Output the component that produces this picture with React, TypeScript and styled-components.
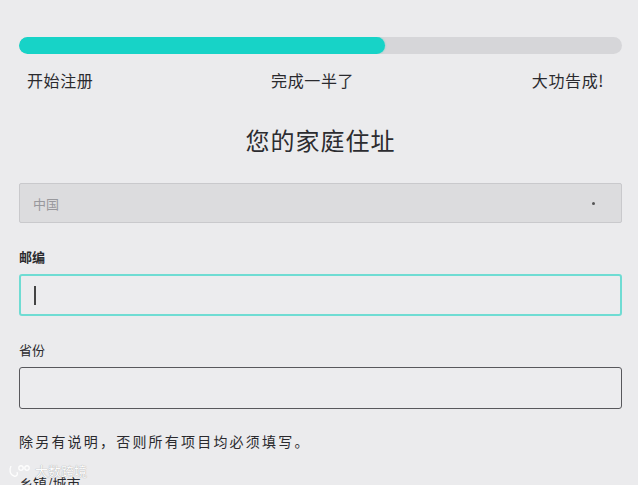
import styled, { createGlobalStyle } from "styled-components";

const GlobalStyle = createGlobalStyle`
  html, body {
    margin: 0;
    padding: 0;
    background: #ebebed;
    font-family: "Noto Sans CJK SC", "Noto Sans", sans-serif;
    overflow: hidden;
  }
`;

const Page = styled.main`
  position: relative;
  width: 638px;
  height: 485px;
  padding: 37px 16px 0 19px;
  box-sizing: border-box;
  overflow: hidden;
`;

const Track = styled.div`
  height: 17px;
  border-radius: 9px;
  background: #d6d6d9;
  overflow: hidden;
`;

const Fill = styled.div`
  height: 100%;
  border-radius: 9px;
  background: #17d3c7;
  box-shadow: 0 0 2px rgba(23, 211, 199, 0.6);
`;

const Steps = styled.div`
  display: flex;
  justify-content: space-between;
  margin: 15px 18px 0 8px;
  font-size: 16px;
  line-height: 22px;
  color: #2a2a2e;
  letter-spacing: 0.6px;
`;

const Title = styled.h1`
  margin: 32px 0 0;
  text-align: center;
  font-size: 24px;
  line-height: 34px;
  font-weight: 400;
  color: #2c2c30;
  letter-spacing: 1px;
`;

const Select = styled.div`
  margin-top: 26px;
  height: 40px;
  box-sizing: border-box;
  display: flex;
  align-items: center;
  justify-content: space-between;
  padding: 0 26px 0 13px;
  background: #dcdcde;
  border: 1px solid #c9c9cc;
  border-radius: 2px;
  font-size: 13px;
  color: #98989c;
`;

const Dot = styled.span`
  width: 3px;
  height: 3px;
  border-radius: 50%;
  background: #555;
`;

const Label = styled.label<{ $bold?: boolean }>`
  display: block;
  margin-top: 24px;
  font-size: 13px;
  line-height: 20px;
  font-weight: ${(p) => (p.$bold ? 700 : 400)};
  color: #2a2a2e;
`;

const Field = styled.div<{ $focused?: boolean }>`
  margin-top: 7px;
  height: 42px;
  box-sizing: border-box;
  display: flex;
  align-items: center;
  padding-left: 13px;
  background: #ececee;
  border: ${(p) => (p.$focused ? "2px solid #6fdcd3" : "1.5px solid #58585c")};
  border-radius: 3px;
`;

const Caret = styled.span`
  width: 1.5px;
  height: 19px;
  background: #444;
`;

const Note = styled.p`
  margin: 21px 0 0;
  font-size: 14px;
  line-height: 22px;
  color: #2a2a2e;
  letter-spacing: 2.2px;
`;

const NextLabel = styled.div`
  margin-top: 21px;
  font-size: 14px;
  line-height: 20px;
  color: #2a2a2e;
`;

const Watermark = styled.div`
  position: absolute;
  left: 8px;
  top: 461px;
  display: flex;
  align-items: center;
  gap: 3px;
  font-size: 13px;
  color: #ffffff;
  text-shadow: 0 0 1px rgba(0, 0, 0, 0.45);
  opacity: 0.9;
`;

export default function App() {
  return (
    <>
      <GlobalStyle />
      <Page>
        <Track>
          <Fill style={{ width: "60.7%" }} />
        </Track>
        <Steps>
          <span>开始注册</span>
          <span>完成一半了</span>
          <span>大功告成!</span>
        </Steps>
        <Title>您的家庭住址</Title>
        <Select>
          <span>中国</span>
          <Dot />
        </Select>
        <Label $bold>邮编</Label>
        <Field $focused>
          <Caret />
        </Field>
        <Label>省份</Label>
        <Field />
        <Note>除另有说明，否则所有项目均必须填写。</Note>
        <NextLabel>乡镇/城市</NextLabel>
        <Watermark>
          <svg width="24" height="16" viewBox="0 0 24 16" fill="none" stroke="#fff" strokeWidth="1.4">
            <path d="M3 3 C1 7 2 12 6 13 C9 14 10 11 9 9" />
            <circle cx="13" cy="5" r="2.2" />
            <circle cx="19" cy="5" r="2.2" />
          </svg>
          <span>大数跨境</span>
        </Watermark>
      </Page>
    </>
  );
}
